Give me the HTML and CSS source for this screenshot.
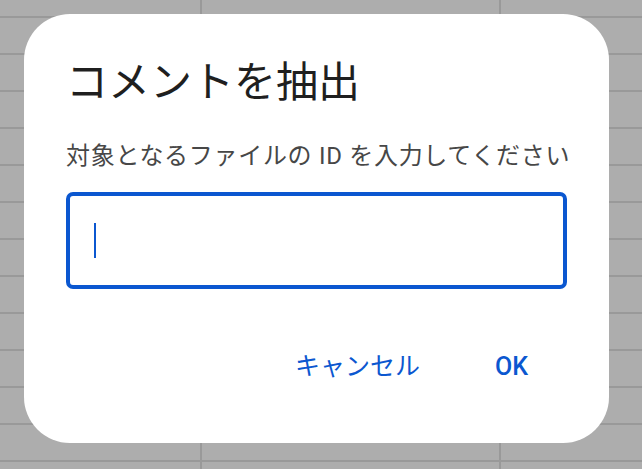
FILE: index.html
```html
<!DOCTYPE html>
<html lang="ja">
<head>
  <meta charset="UTF-8">
  <meta name="viewport" content="width=device-width, initial-scale=1.0">
  <title>コメントを抽出</title>
  <link rel="stylesheet" href="styles.css">
</head>
<body>
  <div class="sheet">
    <div class="dialog" role="dialog" aria-labelledby="dialogTitle">
      <h1 id="dialogTitle">コメントを抽出</h1>
      <p class="prompt">対象となるファイルの ID を入力してください</p>
      <div class="field" role="textbox" aria-label="ファイル ID">
        <span class="caret"></span>
      </div>
      <div class="actions">
        <button type="button" class="text-button">キャンセル</button>
        <button type="button" class="text-button strong">OK</button>
      </div>
    </div>
  </div>
</body>
</html>
```

FILE: styles.css
```css
* {
  box-sizing: border-box;
}

body {
  margin: 0;
  font-family: Roboto, "Noto Sans CJK JP", sans-serif;
  color: #1f1f1f;
}

/* spreadsheet behind the dialog */
.sheet {
  min-height: 100vh;
  padding: 14px 0 0 24px;
  background-color: #adadad;
  background-image:
    linear-gradient(to bottom, #999999 2px, transparent 2px),
    linear-gradient(to right, #999999 2px, transparent 2px);
  background-size: 100% 37px, 299px 100%;
  background-position: 0 16px, 200px 0;
}

.dialog {
  width: 585px;
  height: 429px;
  padding: 45px 42px 0;
  background: #fff;
  border-radius: 46px;
}

.dialog h1 {
  margin: 0;
  font-size: 42px;
  font-weight: 400;
  line-height: 48px;
  color: #1f1f1f;
}

.prompt {
  margin: 33px 0 0;
  font-size: 24px;
  line-height: 32px;
  white-space: nowrap;
  letter-spacing: 0.7px;
  color: #474747;
}

.field {
  display: flex;
  align-items: center;
  height: 97px;
  margin-top: 20px;
  padding-left: 24px;
  border: 4px solid #0b57d0;
  border-radius: 7px;
}

.caret {
  width: 2px;
  height: 35px;
  background: #0b57d0;
}

.actions {
  display: flex;
  justify-content: flex-end;
  gap: 27px;
  margin-top: 58px;
  padding-right: 15px;
}

.text-button {
  padding: 4px 24px;
  border: none;
  background: none;
  font-family: inherit;
  font-size: 25px;
  line-height: 32px;
  color: #0b57d0;
  cursor: pointer;
}

.text-button.strong {
  font-weight: 500;
}
```
